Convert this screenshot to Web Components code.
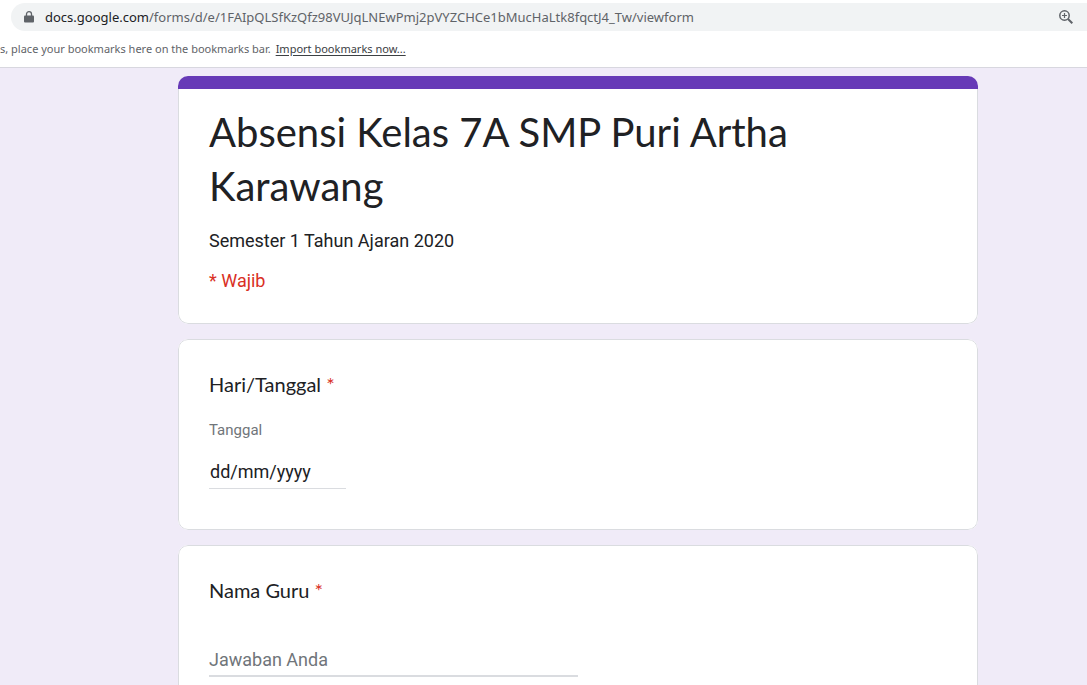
<!DOCTYPE html>
<html lang="id">
<head>
<meta charset="utf-8">
<meta name="viewport" content="width=device-width, initial-scale=1">
<title>Absensi Kelas 7A SMP Puri Artha Karawang</title>
<style>
body { margin: 0; font-family: Roboto, sans-serif; color: #202124; }
</style>
</head>
<body>
<form-app></form-app>

<template id="address-bar">
<style>
:host { display: block; padding: 3px 0 0 11px; font: 13px/28px "Noto Sans", sans-serif; color: #5f6368; }
.pill { display: flex; align-items: center; height: 28px; padding: 0 14px 0 13px; background: #f1f3f4; border-radius: 14px 0 0 14px; }
.url { flex: 1; min-width: 0; margin-left: 11px; overflow: hidden; white-space: nowrap; }
.url ::slotted(b) { font-weight: 400; color: #202124; }
svg { display: block; flex: none; }
button { padding: 0; border: 0; background: none; color: inherit; }
</style>
<div class="pill">
<svg width="10" height="13" viewBox="0 0 10 13" aria-hidden="true"><path d="M1 4.500h8q1 0 1 1v5q0 1-1 1H1q-1 0-1-1v-5q0-1 1-1z" fill="#5f6368"/><path d="M2.500 5V3a2.500 2.300 0 0 1 5 0v2" fill="none" stroke="#5f6368" stroke-width="1.300"/></svg>
<div class="url"><slot></slot></div>
<button type="button" aria-label="Zoom"><svg width="14" height="14" viewBox="0 0 14 14" fill="none" stroke="#5f6368"><circle cx="5.500" cy="5.500" r="4.700" stroke-width="1.500"/><path d="M9 9l4.300 4.300" stroke-width="2"/><path d="M5.500 3v5M3 5.500h5" stroke-width="1.200"/></svg></button>
</div>
</template>

<template id="bookmarks-bar">
<style>
:host { display: block; height: 36px; border-bottom: 1px solid #d8d7df; font: 11px/36px "Noto Sans", sans-serif; color: #5f6368; white-space: nowrap; overflow: hidden; }
a { margin-left: 2px; color: #3c4043; text-decoration: underline; text-underline-offset: 2px; }
</style>
<span>s, place your bookmarks here on the bookmarks bar.</span>
<a href="#import">Import bookmarks now...</a>
</template>

<template id="form-card">
<style>
:host { display: block; background: #fff; border-radius: 10px; overflow: hidden; }
.accent { display: none; height: 13px; background: #673ab7; }
:host([accent]) .accent { display: block; }
.body { padding: 30px; border: 1px solid #dadce0; border-radius: 10px; }
:host([accent]) .body { padding-top: 16px; border-top: 0; border-radius: 0 0 10px 10px; }
</style>
<div class="accent"></div>
<div class="body"><slot></slot></div>
</template>

<template id="form-heading">
<style>
:host { display: block; font-size: 18px; line-height: 24px; }
h1 { margin: 0; font: 400 40px/54px Lato, sans-serif; }
p { margin: 16px 0 0; }
.required { color: #d93025; }
</style>
<h1><slot></slot></h1>
<p><slot name="description"></slot></p>
<p class="required">* Wajib</p>
</template>

<template id="question-title">
<style>
:host { display: block; font: 20px/28px Lato, sans-serif; }
span { color: #d93025; }
</style>
<slot></slot> <span aria-hidden="true">*</span>
</template>

<template id="date-question">
<style>
:host { display: block; padding-bottom: 10px; }
label { display: block; margin-top: 20px; font-size: 15px; line-height: 24px; color: #70757a; }
input { display: block; box-sizing: border-box; width: 137px; height: 34px; margin-top: 13px; padding: 0 1px; border: 0; border-bottom: 1px solid #dadce0; border-radius: 0; background: none; outline: 0; font: 18px/24px Roboto, sans-serif; color: #202124; }
input::placeholder { color: #202124; opacity: 1; }
</style>
<question-title><slot></slot></question-title>
<label for="date">Tanggal</label>
<input id="date" type="text" inputmode="numeric" placeholder="dd/mm/yyyy">
</template>

<template id="text-question">
<style>
:host { display: block; padding-bottom: 10px; }
input { display: block; box-sizing: border-box; width: 50%; height: 34px; margin-top: 39px; padding: 0; border: 0; border-bottom: 2px solid #dadce0; border-radius: 0; background: none; outline: 0; font: 18px/24px Roboto, sans-serif; color: #202124; }
input::placeholder { color: #70757a; opacity: 1; }
</style>
<label for="answer"><question-title><slot></slot></question-title></label>
<input id="answer" type="text" placeholder="Jawaban Anda">
</template>

<template id="form-app">
<style>
:host { display: flex; flex-direction: column; height: 100vh; background: #f0ebf8; }
header { flex: none; background: #fff; }
main { flex: 1; min-height: 0; padding: 8px 0 0 69px; overflow: auto; scrollbar-width: none; }
form { display: flex; flex-direction: column; gap: 15px; max-width: 800px; margin: 0 auto; }
</style>
<header>
<address-bar><b>docs.google.com</b>/forms/d/e/1FAIpQLSfKzQfz98VUJqLNEwPmj2pVYZCHCe1bMucHaLtk8fqctJ4_Tw/viewform</address-bar>
<bookmarks-bar></bookmarks-bar>
</header>
<main>
<form>
<form-card accent><form-heading>Absensi Kelas 7A SMP Puri Artha Karawang<span slot="description">Semester 1 Tahun Ajaran 2020</span></form-heading></form-card>
<form-card><date-question>Hari/Tanggal</date-question></form-card>
<form-card><text-question>Nama Guru</text-question></form-card>
</form>
</main>
</template>

<script>
class TemplateElement extends HTMLElement {
  constructor() {
    super();
    const template = document.getElementById(this.localName);
    this.attachShadow({ mode: "open" }).append(template.content.cloneNode(true));
  }
}
["address-bar", "bookmarks-bar", "form-card", "form-heading", "question-title", "date-question", "text-question", "form-app"]
  .forEach(name => customElements.define(name, class extends TemplateElement {}));
</script>
</body>
</html>
